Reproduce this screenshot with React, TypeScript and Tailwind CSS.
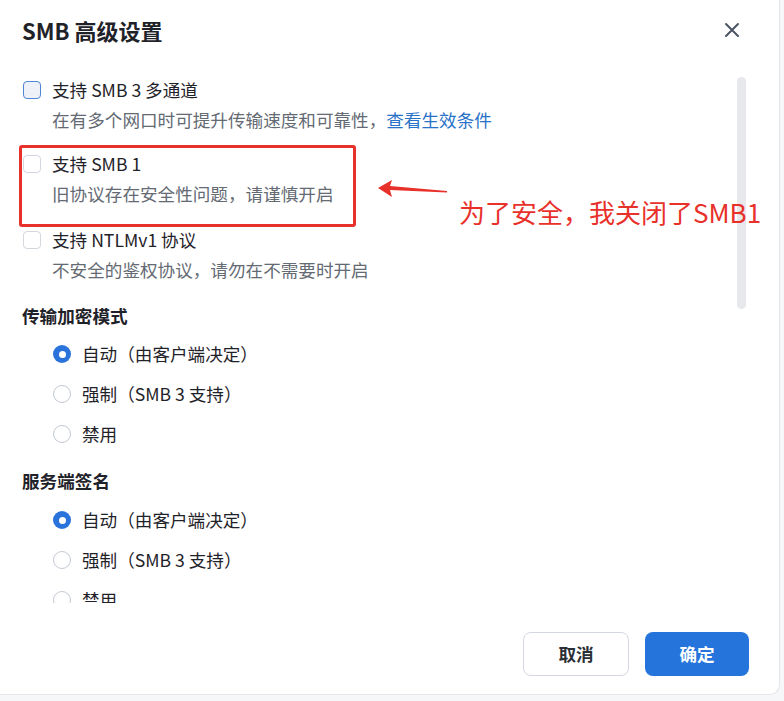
import React from "react";

const font = { fontFamily: '"Noto Sans CJK SC", "Noto Sans", sans-serif' };

function Checkbox({ hover }: { hover?: boolean }) {
  return (
    <div
      className={
        "w-[18px] h-[18px] rounded-[4px] border-[1.5px] shrink-0 " +
        (hover ? "border-[#4f86d4] bg-[#eef2f8]" : "border-[#d3d8df] bg-white")
      }
    />
  );
}

function Radio({ checked }: { checked?: boolean }) {
  return checked ? (
    <div className="w-[18px] h-[18px] rounded-full bg-[#2a73db] flex items-center justify-center shrink-0">
      <div className="w-[7px] h-[7px] rounded-full bg-white" />
    </div>
  ) : (
    <div className="w-[18px] h-[18px] rounded-full border-[1.5px] border-[#c3c9d2] bg-white shrink-0" />
  );
}

function CheckItem({
  label,
  desc,
  link,
  hover,
  className,
}: {
  label: string;
  desc: string;
  link?: string;
  hover?: boolean;
  className?: string;
}) {
  return (
    <div className={className}>
      <div className="flex items-center h-[30px] pl-[23px]">
        <Checkbox hover={hover} />
        <span className="ml-[11px] text-[17.6px] text-[#1f2329]">{label}</span>
      </div>
      <div className="h-[30px] flex items-center pl-[52px] text-[17.6px] text-[#646a73]">
        <span>{desc}</span>
        {link && <span className="text-[#2a72c8]">{link}</span>}
      </div>
    </div>
  );
}

function RadioItem({ label, checked }: { label: string; checked?: boolean }) {
  return (
    <div className="flex items-center h-[40px] pl-[53px]">
      <Radio checked={checked} />
      <span className="ml-[11px] text-[17.6px] text-[#1f2329]">{label}</span>
    </div>
  );
}

export default function App() {
  return (
    <div className="relative w-[784px] h-[701px] bg-[#f6f7f8] overflow-hidden" style={font}>
      <div className="w-[780px] h-[695px] bg-white rounded-br-[10px] border-r border-b border-[#e3e5e8] flex flex-col">
        {/* header */}
        <div className="h-[75px] flex items-start justify-between pl-[22px] pr-[39px] pt-[14px]">
          <div className="text-[22px] font-bold text-[#1f2329] leading-[32px]">SMB 高级设置</div>
          <svg width="16" height="16" viewBox="0 0 16 16" className="mt-[8px]">
            <path d="M2 2 L14 14 M14 2 L2 14" stroke="#4b5563" strokeWidth="2" strokeLinecap="round" />
          </svg>
        </div>

        {/* body */}
        <div className="flex h-[528px]">
          <div className="flex-1 overflow-hidden">
            <CheckItem label="支持 SMB 3 多通道" desc="在有多个网口时可提升传输速度和可靠性，" link="查看生效条件" hover />
            <CheckItem className="mt-[14px]" label="支持 SMB 1" desc="旧协议存在安全性问题，请谨慎开启" />
            <CheckItem className="mt-[16px]" label="支持 NTLMv1 协议" desc="不安全的鉴权协议，请勿在不需要时开启" />
            <div className="mt-[16px] h-[30px] flex items-center pl-[22px] text-[17.6px] font-bold text-[#1f2329]">
              传输加密模式
            </div>
            <div className="mt-[3px]">
              <RadioItem label="自动（由客户端决定）" checked />
              <RadioItem label="强制（SMB 3 支持）" />
              <RadioItem label="禁用" />
            </div>
            <div className="mt-[12px] h-[30px] flex items-center pl-[22px] text-[17.6px] font-bold text-[#1f2329]">
              服务端签名
            </div>
            <div className="mt-[4px]">
              <RadioItem label="自动（由客户端决定）" checked />
              <RadioItem label="强制（SMB 3 支持）" />
              <RadioItem label="禁用" />
            </div>
          </div>
          <div className="w-[42px] shrink-0">
            <div className="mt-[2px] w-[9px] h-[232px] rounded-full bg-[#e6e8eb]" />
          </div>
        </div>

        {/* footer */}
        <div className="flex justify-end items-start gap-[16px] pr-[30px] pt-[29px]">
          <button className="w-[106px] h-[44px] rounded-[8px] border border-[#d3d8df] bg-white text-[17.6px] font-bold text-[#2b2f36]">
            取消
          </button>
          <button className="w-[104px] h-[44px] rounded-[8px] bg-[#2474db] text-[17.6px] font-bold text-white">
            确定
          </button>
        </div>
      </div>

      {/* annotation overlays */}
      <div className="absolute left-[19px] top-[145px] w-[337px] h-[82px] border-[3px] border-[#e8312a] rounded-[3px]" />
      <svg className="absolute left-[370px] top-[176px]" width="84" height="24" viewBox="0 0 84 24">
        <polygon points="8,12 22,4 20,10 77,15 77,16.5 20,14 22,21" fill="#e8312a" />
      </svg>
      <div className="absolute left-[459px] top-[194px] text-[26px] leading-[36px] text-[#e8312a]">
        为了安全，我关闭了SMB1
      </div>
    </div>
  );
}
